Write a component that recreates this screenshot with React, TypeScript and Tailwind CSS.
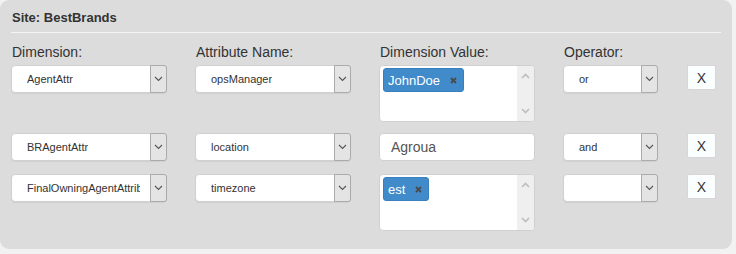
import React from "react";

const font = { fontFamily: '"Liberation Sans", Arial, sans-serif' };

function Chevron() {
  return (
    <svg width="9" height="6" viewBox="0 0 9 6" fill="none">
      <polyline points="1,1 4.5,4.5 8,1" stroke="#555" strokeWidth="1.1" />
    </svg>
  );
}

function Select({ value, w = "w-[156px]" }: { value: string; w?: string }) {
  return (
    <div className={`flex h-[28px] ${w} rounded-[4px] border border-[#d0d0d0] bg-white shadow-[0_1px_1px_rgba(0,0,0,0.06)]`}>
      <div className="flex min-w-0 flex-1 items-center pl-[15px] pr-[10px]">
        <span className="block overflow-hidden whitespace-nowrap text-[11px] leading-[13px] text-[#333]">{value}</span>
      </div>
      <div className="-my-px -mr-px flex w-[17px] items-center justify-center rounded-r-[3px] border border-[#ababab] bg-[#e4e4e4]">
        <Chevron />
      </div>
    </div>
  );
}

function Tag({ label }: { label: string }) {
  return (
    <div className="flex h-[24px] items-center rounded-[3px] border border-[#3a7fbd] bg-[#428bca] pl-[4px] pr-[6px]">
      <span className="text-[13px] leading-[15px] text-white">{label}</span>
      <svg className="ml-[10px]" width="7" height="7" viewBox="0 0 7 7">
        <path d="M1 1 L6 6 M6 1 L1 6" stroke="#4a4a4a" strokeWidth="1.8" />
      </svg>
    </div>
  );
}

function Multi({ tag }: { tag: string }) {
  return (
    <div className="flex h-[57px] w-[156px] overflow-hidden rounded-[4px] border border-[#d0d0d0] bg-white">
      <div className="flex-1 pl-[3px] pt-[2px]">
        <div className="flex">
          <Tag label={tag} />
        </div>
      </div>
      <div className="flex w-[17px] flex-col items-center justify-between bg-[#efefef] pb-[7px] pt-[7px]">
        <svg width="9" height="6" viewBox="0 0 9 6">
          <polyline points="1,5 4.5,1.5 8,5" fill="none" stroke="#bdbdbd" strokeWidth="1.6" />
        </svg>
        <svg width="9" height="6" viewBox="0 0 9 6">
          <polyline points="1,1 4.5,4.5 8,1" fill="none" stroke="#bdbdbd" strokeWidth="1.6" />
        </svg>
      </div>
    </div>
  );
}

function XButton() {
  return (
    <div className="ml-px flex h-[25px] w-[29px] items-center justify-center rounded-[2px] border border-[#d6d6d6] bg-[#fbfeff] text-[14px] leading-[16px] text-[#333]">
      X
    </div>
  );
}

export default function App() {
  return (
    <div className="h-[254px] w-[736px] bg-[#f2f2f2]" style={font}>
      <div className="w-[732px] rounded-[9px] bg-[#dcdcdc] pb-[18px] pt-[9px]">
        <div className="pl-[12px] text-[13px] font-bold leading-[17px] text-[#333]">Site: BestBrands</div>
        <div className="mx-[11px] mt-[6px] h-px bg-[#f4f4f4]" />
        <div className="mt-[11px] flex gap-[28px] pl-[11px] text-[14px] leading-[17px] text-[#333]">
          <div className="w-[156px] pl-px">Dimension:</div>
          <div className="w-[156px] pl-px">Attribute Name:</div>
          <div className="w-[156px] pl-px">Dimension Value:</div>
          <div className="w-[94px] pl-px">Operator:</div>
        </div>
        <div className="mt-[4px] flex items-start gap-[28px] pl-[11px]">
          <Select value="AgentAttr" />
          <Select value="opsManager" />
          <Multi tag="JohnDoe" />
          <Select value="or" w="w-[95px]" />
          <XButton />
        </div>
        <div className="mt-[11px] flex items-start gap-[28px] pl-[11px]">
          <Select value="BRAgentAttr" />
          <Select value="location" />
          <div className="flex h-[28px] w-[156px] items-center rounded-[4px] border border-[#d0d0d0] bg-white pl-[11px] text-[14px] text-[#555]">
            Agroua
          </div>
          <Select value="and" w="w-[95px]" />
          <XButton />
        </div>
        <div className="mt-[13px] flex items-start gap-[28px] pl-[11px]">
          <Select value="FinalOwningAgentAttribute" />
          <Select value="timezone" />
          <Multi tag="est" />
          <Select value="" w="w-[95px]" />
          <XButton />
        </div>
      </div>
    </div>
  );
}
